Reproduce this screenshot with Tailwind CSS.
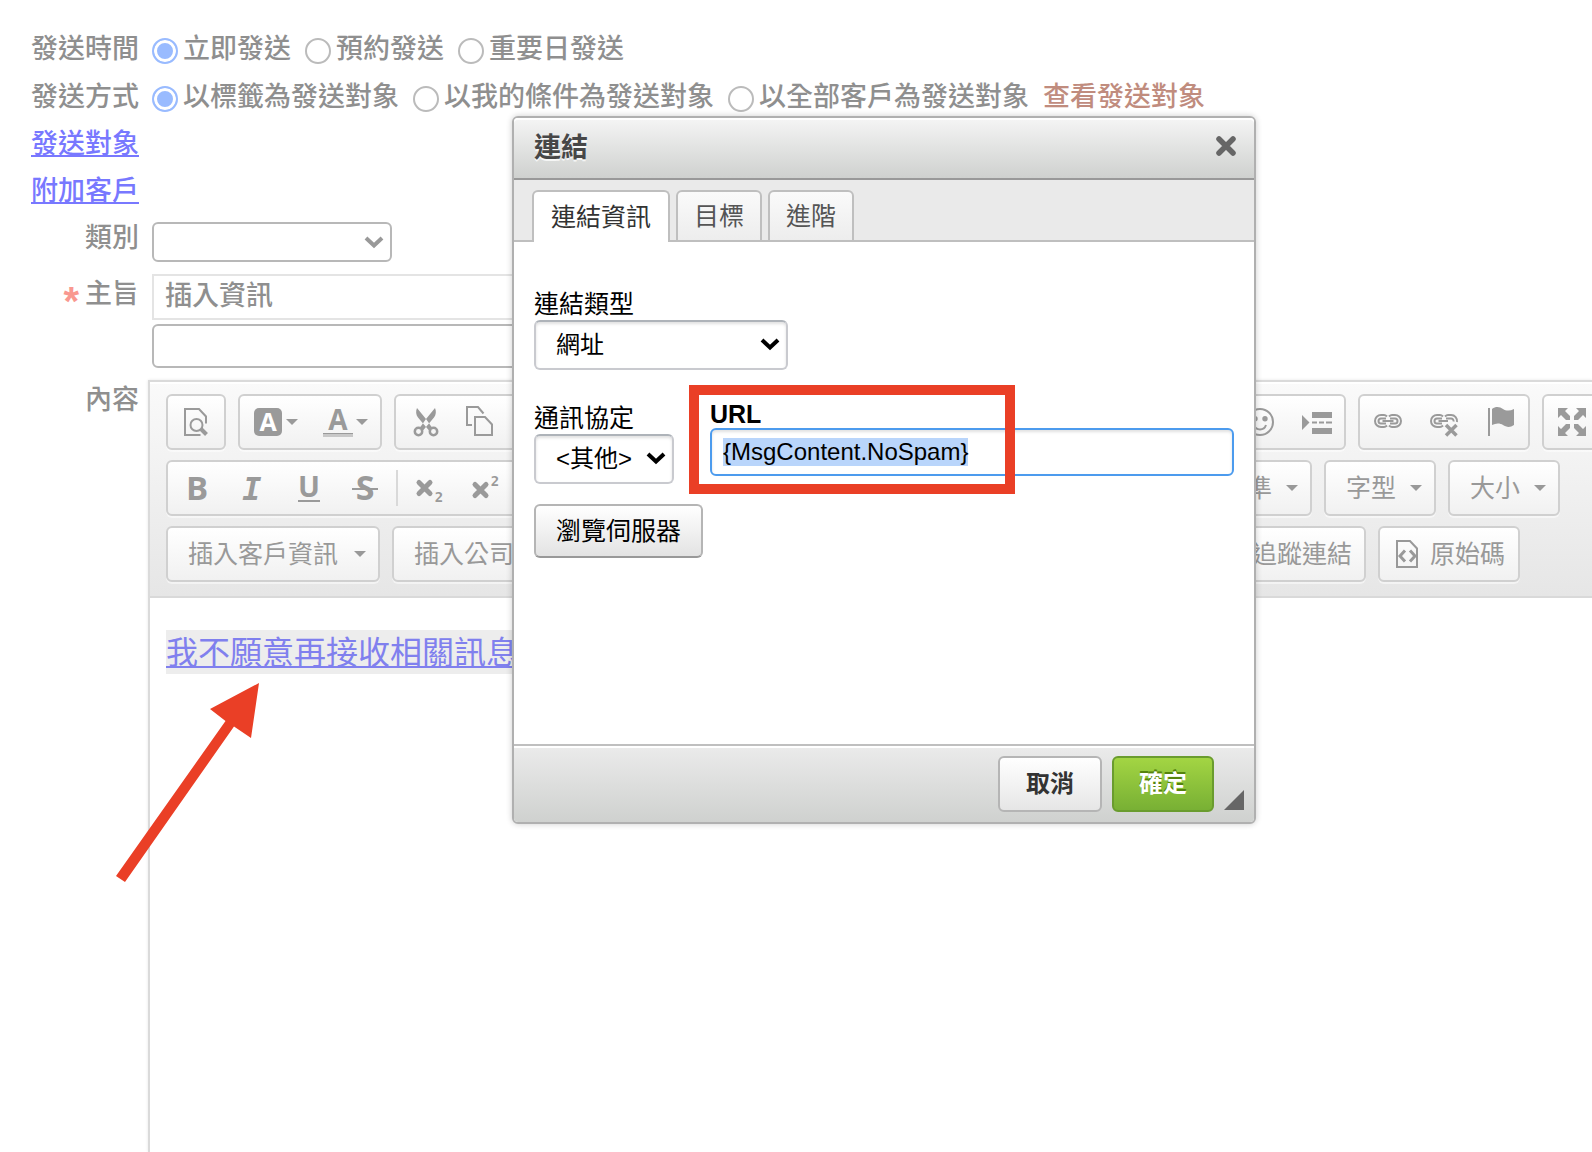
<!DOCTYPE html>
<html lang="zh-Hant">
  <head>
    <meta charset="UTF-8" />
    <meta name="viewport" content="width=device-width, initial-scale=1.0" />
    <title>連結</title>
    <script src="https://cdn.jsdelivr.net/npm/@tailwindcss/browser@4"></script>
  </head>
  <body class="relative min-h-screen flex flex-col overflow-hidden bg-white font-['Liberation_Sans','Noto_Sans_CJK_TC',sans-serif]">
    <!-- Dimmed mail form -->
    <form class="flex-1 flex flex-col pt-[25px] text-[27px] leading-10 font-medium text-[#8f8f8f]">
      <div class="h-12 flex items-center gap-[13px]">
        <span class="w-[139px] text-right">發送時間</span>
        <div class="flex gap-[14px]">
          <label class="flex items-center gap-[5px]">
            <input type="radio" name="time" checked class="mt-1 size-[26px] appearance-none rounded-full border-2 border-[#bbb] checked:border-[#9bf] checked:bg-[#9bf] shadow-[inset_0_0_0_3px_#fff]" />立即發送
          </label>
          <label class="flex items-center gap-[5px]">
            <input type="radio" name="time" class="mt-1 size-[26px] appearance-none rounded-full border-2 border-[#bbb] checked:border-[#9bf]" />預約發送
          </label>
          <label class="flex items-center gap-[5px]">
            <input type="radio" name="time" class="mt-1 size-[26px] appearance-none rounded-full border-2 border-[#bbb] checked:border-[#9bf]" />重要日發送
          </label>
        </div>
      </div>
      <div class="h-12 flex items-center gap-[13px]">
        <span class="w-[139px] text-right">發送方式</span>
        <div class="flex gap-[14px]">
          <label class="flex items-center gap-[5px]">
            <input type="radio" name="target" checked class="mt-1 size-[26px] appearance-none rounded-full border-2 border-[#bbb] checked:border-[#9bf] checked:bg-[#9bf] shadow-[inset_0_0_0_3px_#fff]" />以標籤為發送對象
          </label>
          <label class="flex items-center gap-[5px]">
            <input type="radio" name="target" class="mt-1 size-[26px] appearance-none rounded-full border-2 border-[#bbb] checked:border-[#9bf]" />以我的條件為發送對象
          </label>
          <label class="flex items-center gap-[5px]">
            <input type="radio" name="target" class="mt-1 size-[26px] appearance-none rounded-full border-2 border-[#bbb] checked:border-[#9bf]" />以全部客戶為發送對象
          </label>
          <a href="#" class="text-[#c08c7e]">查看發送對象</a>
        </div>
      </div>
      <div class="h-[46px] flex items-center">
        <a href="#" class="w-[139px] text-right text-[#7878ff] underline decoration-2 underline-offset-2">發送對象</a>
      </div>
      <div class="h-12 flex items-center">
        <a href="#" class="w-[139px] text-right text-[#7878ff] underline decoration-2 underline-offset-2">附加客戶</a>
      </div>
      <div class="mt-[7px] flex gap-[13px]">
        <label for="category" class="w-[139px] -mt-1 text-right">類別</label>
        <div class="relative">
          <select id="category" class="block w-60 h-10 appearance-none rounded-md border-2 border-[#b8b8b8] bg-white"><option></option></select>
          <svg class="absolute right-2 top-[14px] pointer-events-none" width="20" height="13" viewBox="0 0 20 13" fill="none" stroke="#999" stroke-width="4"><path d="M2 2l8 7.500l8-7.500" /></svg>
        </div>
      </div>
      <div class="mt-3 flex gap-[13px]">
        <label for="subject" class="w-[139px] text-right"><span class="mr-[6px] font-bold text-[#f99890] text-[40px] leading-6 align-[-12px]">*</span>主旨</label>
        <div class="w-[900px] flex flex-col gap-1">
          <div class="h-[46px] border-2 border-[#e4e4e4] pl-[11px]">插入資訊</div>
          <input id="subject" type="text" class="h-11 rounded-md border-2 border-[#b8b8b8]" />
        </div>
      </div>
      <div class="mt-3 flex-1 flex gap-[9px]">
        <span class="w-[139px] shrink-0 text-right">內容</span>
        <!-- Rich text editor -->
        <div class="flex-1 min-w-0 flex flex-col border-l-2 border-t-2 border-[#dadada] shadow-[0_0_3px_rgba(0,0,0,0.1)] font-normal text-[25px] text-[#999]">
          <div class="flex flex-col gap-[10px] px-4 pt-3 pb-[14px] border-b-2 border-[#d9d9d9] bg-linear-to-b from-[#fafafa] to-[#e6e6e6] shadow-[inset_0_2px_0_#fff]">
            <div class="flex gap-3 *:shrink-0 *:flex *:h-14 *:rounded-md *:border-2 *:border-[#d0d0d0] *:bg-linear-to-b *:from-white *:to-[#f1f1f1] *:shadow-[0_2px_0_rgba(255,255,255,0.5)] text-[#9a9a9a]">
              <div>
                <button type="button" aria-label="預覽" class="w-14 grid place-items-center">
                  <svg width="32" height="32" viewBox="0 0 32 32" fill="none" stroke="currentColor" stroke-width="2"><path d="M20.500 29H5V3h14l7 7.500v7" /><circle cx="16.500" cy="19" r="6" /><path d="M21 23l5.500 5.500" stroke-width="4" /></svg>
                </button>
              </div>
              <div>
                <button type="button" aria-label="背景顏色" class="w-[70px] flex items-center gap-[2px] pl-3">
                  <svg class="overflow-visible" width="32" height="32" viewBox="0 0 32 32" fill="currentColor"><rect x="2" y="2" width="28" height="28" rx="5" /><text x="16" y="25" text-anchor="middle" fill="#fff" class="font-['Open_Sans'] font-bold text-[25px]">A</text></svg>
                  <svg width="12" height="6" viewBox="0 0 12 6" fill="currentColor"><path d="M0 0h12l-6 6z" /></svg>
                </button>
                <button type="button" aria-label="文字顏色" class="w-[70px] flex items-center gap-[2px] pl-3">
                  <svg class="overflow-visible" width="32" height="32" viewBox="0 0 32 32" fill="currentColor"><text x="16" y="24" text-anchor="middle" class="font-['Open_Sans'] font-bold text-[28px]">A</text><path d="M1 27h30v1H1z" /><path d="M1 28h30v3H1z" fill="#c8c8c8" /></svg>
                  <svg width="12" height="6" viewBox="0 0 12 6" fill="currentColor"><path d="M0 0h12l-6 6z" /></svg>
                </button>
              </div>
              <div class="w-[228px]">
                <button type="button" aria-label="剪下" class="w-14 grid place-items-center">
                  <svg width="32" height="32" viewBox="0 0 32 32" fill="currentColor"><path d="M9 2C7.500 5 8 9 10 11.500l11 13l3-3L18 13zM27 2c1.500 3 1 7-1 9.500l-11 13l-3-3L18 13z" /><g fill="none" stroke="currentColor" stroke-width="2.500"><circle cx="10.500" cy="25.500" r="3.700" /><circle cx="25.500" cy="25.500" r="3.700" /></g></svg>
                </button>
                <button type="button" aria-label="複製" class="w-14 grid place-items-center">
                  <svg width="32" height="32" viewBox="0 0 32 32" fill="none" stroke="currentColor" stroke-width="2"><path d="M8 19H3V1h11l5.500 6.500" /><path d="M11 11h10l7 7.500V29H11z" /></svg>
                </button>
              </div>
              <div class="w-[712px] justify-end">
                <button type="button" aria-label="表情符號" class="w-14 grid place-items-center">
                  <svg width="32" height="32" viewBox="0 0 32 32" fill="none" stroke="currentColor" stroke-width="2"><circle cx="16" cy="16" r="13" /><path d="M10 19c2 6 10 6 12 0" /><g fill="currentColor" stroke="none"><circle cx="11" cy="12.700" r="2.700" /><circle cx="21" cy="12.700" r="2.700" /></g></svg>
                </button>
                <button type="button" aria-label="分頁符號" class="w-14 grid place-items-center">
                  <svg width="32" height="32" viewBox="0 0 32 32" fill="currentColor"><path d="M2 9l7.500 7.500L2 24zM12 6h20v6H12zM12 22h20v6H12zM12 15.500h5v2h-5zM19 15.500h5v2h-5zM26 15.500h6v2h-6z" /></svg>
                </button>
              </div>
              <div>
                <button type="button" aria-label="連結" class="w-14 grid place-items-center">
                  <svg width="32" height="32" viewBox="0 0 32 32" fill="none" stroke="currentColor" stroke-width="2"><path d="M15 10.500c-1-1-2-1.500-3-1.500H9a6 6 0 0 0 0 12h3c1 0 2-.5 3-1.500M17 10.500c1-1 2-1.500 3-1.500h3a6 6 0 0 1 0 12h-3c-1 0-2-.5-3-1.500" /><path d="M14 12.500H9a2.500 2.500 0 0 0 0 5h5M18 12.500h5a2.500 2.500 0 0 1 0 5h-5" /><path d="M10.500 15h11" stroke-width="2" /></svg>
                </button>
                <button type="button" aria-label="移除連結" class="w-14 grid place-items-center">
                  <svg width="32" height="32" viewBox="0 0 32 32" fill="none" stroke="currentColor" stroke-width="2"><path d="M15 10.500c-1-1-2-1.500-3-1.500H9a6 6 0 0 0 0 12h3c1 0 2-.5 3-1.500M17 10.500c1-1 2-1.500 3-1.500h3a6 6 0 0 1 6 7" /><path d="M14 12.500H9a2.500 2.500 0 0 0 0 5h5M18 12.500h5a2.500 2.500 0 0 1 2.500 3" /><path d="M10.500 15H20" /><path d="M18 19l10.500 10.500M28.500 19L18 29.500" stroke-width="3.500" /></svg>
                </button>
                <button type="button" aria-label="錨點" class="w-14 grid place-items-center">
                  <svg width="32" height="32" viewBox="0 0 32 32" fill="currentColor"><path d="M4 2h2v28H4zM8 3c4-3 8-2 11 0s7 2 11 0v16c-4 3-8 2-11 0s-7-2-11 0z" /></svg>
                </button>
              </div>
              <div>
                <button type="button" aria-label="最大化" class="w-14 grid place-items-center">
                  <svg width="32" height="32" viewBox="0 0 32 32" fill="currentColor"><path d="M2 2h10l-3 3l5 5v4h-4L5 9l-3 3zM30 2v10l-3-3l-5 5h-4v-4l5-5l-3-3zM2 30V20l3 3l5-5h4v4l-5 5l3 3zM30 30H20l3-3l-5-5v-4h4l5 5l3-3z" /></svg>
                </button>
              </div>
            </div>
            <div class="flex gap-3 *:shrink-0 *:flex *:h-14 *:rounded-md *:border-2 *:border-[#d0d0d0] *:bg-linear-to-b *:from-white *:to-[#f1f1f1] *:shadow-[0_2px_0_rgba(255,255,255,0.5)]">
              <div class="w-[1022px] items-center text-[#9a9a9a]">
                <button type="button" aria-label="粗體" class="w-14 grid place-items-center">
                  <svg class="overflow-visible" width="32" height="32" viewBox="0 0 32 32" fill="currentColor"><text x="17" y="28" text-anchor="middle" class="font-['Open_Sans'] font-bold text-[33px]">B</text></svg>
                </button>
                <button type="button" aria-label="斜體" class="w-14 grid place-items-center">
                  <svg class="overflow-visible" width="32" height="32" viewBox="0 0 32 32" fill="currentColor"><text x="16" y="28" text-anchor="middle" class="font-['DejaVu_Sans_Mono'] italic font-bold text-[32px]">I</text></svg>
                </button>
                <button type="button" aria-label="底線" class="w-14 grid place-items-center">
                  <svg class="overflow-visible" width="32" height="32" viewBox="0 0 32 32" fill="currentColor"><text x="17" y="25" text-anchor="middle" class="font-['Open_Sans'] font-bold text-[29px]">U</text><path d="M6 28h22v2H6z" /></svg>
                </button>
                <button type="button" aria-label="刪除線" class="w-14 grid place-items-center">
                  <svg class="overflow-visible" width="32" height="32" viewBox="0 0 32 32" fill="currentColor"><text x="17" y="28" text-anchor="middle" class="font-['Open_Sans'] font-bold text-[34px]">S</text><path d="M4 16h26v2H4z" /></svg>
                </button>
                <span class="mx-1 w-[2px] h-9 bg-[#d9d9d9]"></span>
                <button type="button" aria-label="下標" class="w-14 grid place-items-center">
                  <svg class="overflow-visible" width="32" height="32" viewBox="0 0 32 32" fill="none" stroke="currentColor"><path d="M5 10.500l11 11M16 10.500L5 21.500" stroke-width="5" stroke-linecap="round" /><text x="25" y="30" text-anchor="middle" fill="currentColor" stroke="none" class="font-['DejaVu_Sans_Mono'] font-bold text-[14px]">2</text></svg>
                </button>
                <button type="button" aria-label="上標" class="w-14 grid place-items-center">
                  <svg class="overflow-visible" width="32" height="32" viewBox="0 0 32 32" fill="none" stroke="currentColor"><path d="M5 12.500l11 11M16 12.500L5 23.500" stroke-width="5" stroke-linecap="round" /><text x="25" y="14" text-anchor="middle" fill="currentColor" stroke="none" class="font-['DejaVu_Sans_Mono'] font-bold text-[14px]">2</text></svg>
                </button>
              </div>
              <button type="button" class="w-[112px] items-center justify-between pl-5 pr-3">標準<svg width="12" height="6" viewBox="0 0 12 6" fill="currentColor"><path d="M0 0h12l-6 6z" /></svg></button>
              <button type="button" class="w-[112px] items-center justify-between pl-5 pr-3">字型<svg width="12" height="6" viewBox="0 0 12 6" fill="currentColor"><path d="M0 0h12l-6 6z" /></svg></button>
              <button type="button" class="w-[112px] items-center justify-between pl-5 pr-3">大小<svg width="12" height="6" viewBox="0 0 12 6" fill="currentColor"><path d="M0 0h12l-6 6z" /></svg></button>
            </div>
            <div class="flex gap-3 *:shrink-0 *:flex *:h-14 *:rounded-md *:border-2 *:border-[#d0d0d0] *:bg-linear-to-b *:from-white *:to-[#f1f1f1] *:shadow-[0_2px_0_rgba(255,255,255,0.5)]">
              <button type="button" class="w-[214px] items-center justify-between pl-5 pr-3">插入客戶資訊<svg width="12" height="6" viewBox="0 0 12 6" fill="currentColor"><path d="M0 0h12l-6 6z" /></svg></button>
              <button type="button" class="w-[214px] items-center justify-between pl-5 pr-3">插入公司資訊<svg width="12" height="6" viewBox="0 0 12 6" fill="currentColor"><path d="M0 0h12l-6 6z" /></svg></button>
              <button type="button" class="w-[748px] items-center justify-end pr-3">追蹤連結</button>
              <button type="button" class="items-center gap-[6px] pl-3 pr-[13px]">
                <svg width="32" height="32" viewBox="0 0 32 32" fill="none" stroke="currentColor" stroke-width="2"><path d="M5 3h13l7 7.500V29H5z" /><path d="M13 12.500l-5 5.500l5 5.500M18 12.500l5 5.500l-5 5.500" stroke-width="3" /></svg>原始碼
              </button>
            </div>
          </div>
          <div class="flex-1 px-4 pt-8 whitespace-nowrap">
            <a href="#" class="inline-block h-11 leading-[46px] bg-[#ededed] text-[32px] text-[#8080ee] underline decoration-2 underline-offset-2">我不願意再接收相關訊息</a>
          </div>
        </div>
      </div>
    </form>

    <!-- Link dialog -->
    <div role="dialog" aria-labelledby="dialog-title" class="absolute left-[512px] top-[116px] w-[744px] flex flex-col rounded-md border-2 border-[#b0b0b0] bg-white shadow-[0_0_6px_rgba(0,0,0,0.2)] text-[25px] leading-8 text-black">
      <div class="h-[62px] flex items-center justify-between pl-5 pr-[17px] rounded-t border-b-2 border-[#999] bg-linear-to-b from-[#f5f5f5] to-[#cfd1cf] shadow-[inset_0_2px_0_#fff]">
        <h2 id="dialog-title" class="text-[27px] font-bold text-[#474747] text-shadow-[0_2px_0_rgba(255,255,255,0.75)]">連結</h2>
        <button type="button" aria-label="關閉" class="pb-1">
          <svg width="22" height="22" viewBox="0 0 22 22" fill="none" stroke="#666" stroke-width="5.500" stroke-linecap="round"><path d="M4 4l14 14M18 4L4 18" /></svg>
        </button>
      </div>
      <div role="tablist" class="flex items-end gap-[6px] pt-[10px] pl-[18px] bg-[#eaeaea] shadow-[inset_0_-2px_0_#bfbfbf] text-[#555]">
        <button type="button" role="tab" aria-selected="true" class="h-[52px] px-[17px] rounded-t-md border-2 border-b-0 border-[#bfbfbf] bg-white text-[#333]">連結資訊</button>
        <button type="button" role="tab" class="h-[52px] px-4 rounded-t-md border-2 border-[#bfbfbf] bg-linear-to-b from-[#fafafa] to-[#ededed]">目標</button>
        <button type="button" role="tab" class="h-[52px] px-4 rounded-t-md border-2 border-[#bfbfbf] bg-linear-to-b from-[#fafafa] to-[#ededed]">進階</button>
      </div>
      <div class="h-[502px] px-5 pt-[46px]">
        <label for="link-type" class="block">連結類型</label>
        <div class="relative w-[254px]">
          <select id="link-type" class="block w-full h-[50px] pl-5 appearance-none rounded-md border-2 border-[#c9cacf] border-t-[#aeb3b9] bg-white shadow-[inset_0_2px_3px_rgba(0,0,0,0.12)] text-[24px]"><option>網址</option></select>
          <svg class="absolute right-2 top-[18px] pointer-events-none" width="20" height="13" viewBox="0 0 20 13" fill="none" stroke="#000" stroke-width="4"><path d="M2 2l8 7.500l8-7.500" /></svg>
        </div>
        <div class="mt-[30px] flex items-end gap-9">
          <div>
            <label for="protocol" class="block">通訊協定</label>
            <div class="relative w-[140px]">
              <select id="protocol" class="block w-full h-[50px] pl-5 appearance-none rounded-md border-2 border-[#c9cacf] border-t-[#aeb3b9] bg-white shadow-[inset_0_2px_3px_rgba(0,0,0,0.12)] text-[24px]"><option>&lt;其他&gt;</option></select>
              <svg class="absolute right-2 top-[18px] pointer-events-none" width="20" height="13" viewBox="0 0 20 13" fill="none" stroke="#000" stroke-width="4"><path d="M2 2l8 7.500l8-7.500" /></svg>
            </div>
          </div>
          <div class="relative flex-1 pb-2">
            <label for="url" class="block leading-7 font-bold">URL</label>
            <input id="url" type="text" value="{MsgContent.NoSpam}" class="block w-full h-12 px-[11px] rounded-md border-2 border-[#4c9bee] outline-none bg-white shadow-[inset_0_2px_3px_rgba(0,0,0,0.12)] text-[24px] selection:bg-[#b9d5fb] selection:text-black" />
            <!-- Highlight frame -->
            <div class="absolute -left-[21px] -top-[15px] w-[326px] h-[109px] border-10 border-[#ea3f26] pointer-events-none"></div>
          </div>
        </div>
        <button type="button" class="mt-5 h-[54px] px-5 rounded-md border-2 border-[#b5b5b5] border-b-[#999] bg-linear-to-b from-white to-[#e3e3e3]">瀏覽伺服器</button>
      </div>
      <div class="h-[78px] flex items-center gap-[10px] pl-5 pr-[10px] rounded-b border-t-2 border-[#bfbfbf] bg-linear-to-b from-[#ebebeb] to-[#cfd1cf] shadow-[inset_0_2px_0_#fff] font-bold">
        <button type="button" class="ml-auto w-[104px] h-14 rounded-md border-2 border-[#b5b5b5] bg-linear-to-b from-white to-[#e6e6e6] text-[#333] text-[24px]">取消</button>
        <button type="button" class="w-[102px] h-14 rounded-md border-2 border-[#6a9c2e] bg-linear-to-b from-[#a3d543] to-[#78b034] text-white text-[24px] text-shadow-[0_-2px_0_#55830c]">確定</button>
        <svg class="self-end mb-3" width="20" height="20" viewBox="0 0 20 20" fill="#666"><path d="M20 0v20H0z" /></svg>
      </div>
    </div>

    <!-- Arrow pointing at the link -->
    <svg class="absolute left-[116px] top-[683px] pointer-events-none" width="144" height="200" viewBox="0 0 144 200" fill="#ea3f26"><path d="M143 0l-8 55l-17-11.500L9 199l-9-6L109.500 38L94 26z" /></svg>

    <script>
      document.getElementById("url").select();
    </script>
  </body>
</html>
